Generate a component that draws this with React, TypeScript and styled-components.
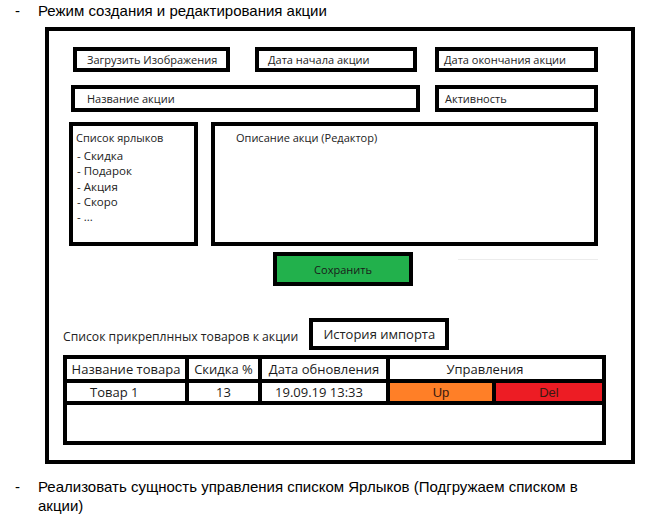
import React from 'react';
import styled, { createGlobalStyle } from 'styled-components';

const GlobalStyle = createGlobalStyle`
  html, body {
    margin: 0;
    padding: 0;
    background: #ffffff;
  }
  body {
    font-family: 'Liberation Sans', Arial, sans-serif;
    color: #000000;
  }
`;

const Page = styled.div`
  width: 656px;
  height: 525px;
  overflow: hidden;
  background: #ffffff;
`;

const Bullet = styled.div<{ $top: number }>`
  display: flex;
  padding-left: 15px;
  margin-top: ${(p) => p.$top}px;
  font-family: 'Liberation Sans', Arial, sans-serif;
  font-size: 15px;
  line-height: 19px;
  color: #000;
`;

const Dash = styled.span`
  flex: 0 0 23px;
`;

const BulletText = styled.span`
  width: 540px;
`;

const Frame = styled.div`
  box-sizing: border-box;
  width: 590px;
  height: 437px;
  margin: 7px 0 0 45px;
  border: 4px solid #000;
  display: flex;
  flex-direction: column;
  font-family: 'Open Sans', 'Noto Sans', sans-serif;
  color: #222;
`;

const Row = styled.div<{ $indent: number; $gap: number; $top: number }>`
  display: flex;
  align-items: flex-start;
  padding-left: ${(p) => p.$indent}px;
  gap: ${(p) => p.$gap}px;
  margin-top: ${(p) => p.$top}px;
`;

const Box = styled.div<{ $w: number; $h: number; $pad?: number }>`
  box-sizing: border-box;
  width: ${(p) => p.$w}px;
  height: ${(p) => p.$h}px;
  border: 4px solid #000;
  padding-left: ${(p) => p.$pad ?? 12}px;
  display: flex;
  align-items: center;
  font-size: 11px;
  white-space: nowrap;
`;

const Panel = styled.div<{ $w: number; $pad: number }>`
  box-sizing: border-box;
  width: ${(p) => p.$w}px;
  height: 124px;
  border: 4px solid #000;
  padding: 4px 0 0 ${(p) => p.$pad}px;
  font-size: 11px;
  line-height: 15px;
`;

const PanelTitle = styled.div`
  margin-bottom: 3px;
`;

const TagList = styled.ul`
  list-style: none;
  margin: 0;
  padding: 0 0 0 1px;
`;

const Tag = styled.li`
  font-size: 11.5px;
  line-height: 15.3px;
  height: 15.3px;
`;

const SaveButton = styled.button`
  box-sizing: border-box;
  width: 140px;
  height: 34px;
  border: 4px solid #000;
  background: #22b14c;
  font-family: 'Open Sans', 'Noto Sans', sans-serif;
  font-size: 11px;
  color: #1a1a1a;
  padding: 0;
`;

const FaintLine = styled.div`
  width: 140px;
  height: 1px;
  margin-top: 7px;
  background: #ececec;
`;

const Caption = styled.span`
  font-size: 12.2px;
  line-height: 18px;
  padding-top: 10px;
  white-space: nowrap;
`;

const HistoryBox = styled.div`
  box-sizing: border-box;
  width: 140px;
  height: 32px;
  border: 4px solid #000;
  display: flex;
  align-items: center;
  justify-content: center;
  font-size: 13px;
`;

const Table = styled.div`
  display: grid;
  grid-template-columns: 118px 69px 124px 102px 106px;
  grid-template-rows: 20px 18px 36px;
  gap: 4px;
  padding: 4px;
  width: max-content;
  background: #000;
  margin: 5px 0 0 14px;
`;

const Cell = styled.div<{ $bg?: string; $span?: number; $align?: string; $shift?: number }>`
  background: ${(p) => p.$bg ?? '#fff'};
  grid-column: span ${(p) => p.$span ?? 1};
  display: flex;
  align-items: center;
  justify-content: ${(p) => p.$align ?? 'center'};
  padding-left: ${(p) => p.$shift ?? 0}px;
  font-size: 13px;
  white-space: nowrap;
  color: #1a1a1a;
`;

const ActionCell = styled(Cell)`
  font-family: 'Liberation Sans', Arial, sans-serif;
  font-size: 13px;
  color: #3a1a10;
`;

const tags = ['- Скидка', '- Подарок', '- Акция', '- Скоро', '- ...'];

const App = (): JSX.Element => {
  return (
    <Page>
      <GlobalStyle />
      <Bullet $top={1}>
        <Dash>-</Dash>
        <BulletText>Режим создания и редактирования акции</BulletText>
      </Bullet>
      <Frame>
        <Row $indent={24} $gap={25} $top={16}>
          <Box $w={157} $h={25} $pad={10}>Загрузить Изображения</Box>
          <Box $w={162} $h={25} $pad={9}>Дата начала акции</Box>
          <Box $w={163} $h={25} $pad={5} style={{ marginLeft: -7 }}>Дата окончания акции</Box>
        </Row>
        <Row $indent={22} $gap={15} $top={13}>
          <Box $w={349} $h={27}>Название акции</Box>
          <Box $w={163} $h={27} $pad={6}>Активность</Box>
        </Row>
        <Row $indent={20} $gap={13} $top={10}>
          <Panel $w={129} $pad={3}>
            <PanelTitle>Список ярлыков</PanelTitle>
            <TagList>
              {tags.map((t) => (
                <Tag key={t}>{t}</Tag>
              ))}
            </TagList>
          </Panel>
          <Panel $w={387} $pad={21}>
            <PanelTitle>Описание акци (Редактор)</PanelTitle>
          </Panel>
        </Row>
        <Row $indent={224} $gap={45} $top={6}>
          <SaveButton>Сохранить</SaveButton>
          <FaintLine />
        </Row>
        <Row $indent={14} $gap={11} $top={32}>
          <Caption>Список прикреплнных товаров к акции</Caption>
          <HistoryBox>История импорта</HistoryBox>
        </Row>
        <Table>
          <Cell>Название товара</Cell>
          <Cell>Скидка %</Cell>
          <Cell>Дата обновления</Cell>
          <Cell $span={2} style={{ paddingRight: 22 }}>Управления</Cell>
          <Cell $align="flex-start" $shift={23}>Товар 1</Cell>
          <Cell>13</Cell>
          <Cell style={{ paddingRight: 10 }}>19.09.19 13:33</Cell>
          <ActionCell $bg="#ff7f27">Up</ActionCell>
          <ActionCell $bg="#ed1c24">Del</ActionCell>
          <Cell $span={5} />
        </Table>
      </Frame>
      <Bullet $top={13}>
        <Dash>-</Dash>
        <BulletText>Реализовать сущность управления списком Ярлыков (Подгружаем списком в акции)</BulletText>
      </Bullet>
    </Page>
  );
};

export default App;
